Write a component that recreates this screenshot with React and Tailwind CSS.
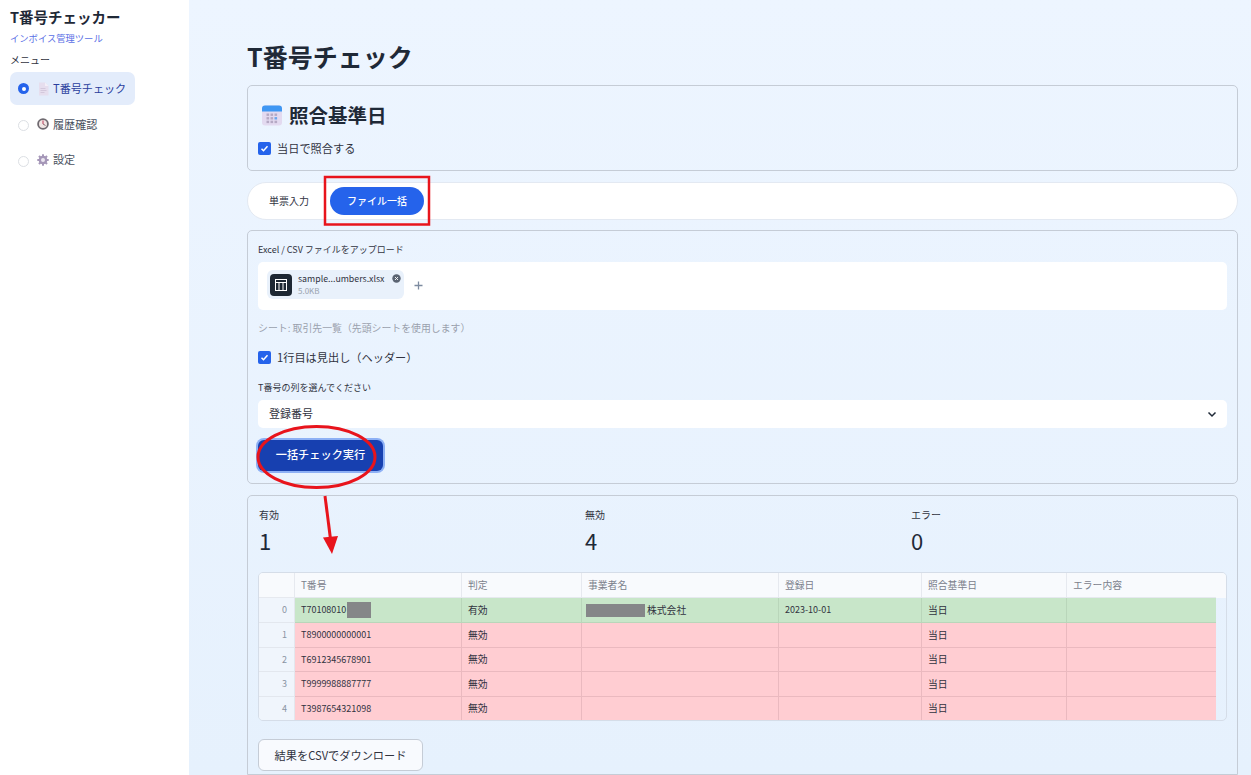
import React from "react";

const FONT = '"Noto Sans CJK JP", "Noto Sans", sans-serif';

function DocIcon() {
  return (
    <svg width="11" height="14" viewBox="0 0 11 14" className="ml-[1px] shrink-0">
      <path d="M1 0.500h6l3.500 3.500v9.500h-9.500z" fill="#e6deee" />
      <path d="M7 0.500l3.500 3.500h-3.500z" fill="#f4eff7" />
      <path d="M2.500 6.500h5M2.500 8.500h6M2.500 10.500h4" stroke="#d3c8dc" strokeWidth="1" />
    </svg>
  );
}

function ClockIcon() {
  return (
    <svg width="12" height="12" viewBox="0 0 12 12" className="shrink-0">
      <circle cx="6" cy="6" r="5.800" fill="#6f6a70" />
      <circle cx="6" cy="6" r="4" fill="#f1e6e4" />
      <path d="M6 2.500v3.500" stroke="#c03a5a" strokeWidth="1" />
      <path d="M6 6l2.500 1.500" stroke="#8a6a70" strokeWidth="1" />
    </svg>
  );
}

function GearIcon() {
  return (
    <svg width="12" height="12" viewBox="0 0 12 12" className="shrink-0">
      <g fill="#a597b8">
        <circle cx="6" cy="6" r="4.300" />
        {[0, 45, 90, 135].map((a) => (
          <rect key={a} x="5" y="0.300" width="2" height="11.400" transform={`rotate(${a} 6 6)`} />
        ))}
      </g>
      <circle cx="6" cy="6" r="2" fill="#ebe6f0" />
    </svg>
  );
}

function CalendarIcon() {
  return (
    <svg width="20" height="21" viewBox="0 0 20 21" className="shrink-0">
      <rect x="0" y="0.500" width="20" height="20" rx="3" fill="#e3daf0" />
      <path d="M0 6.500V3.500a3 3 0 0 1 3-3h14a3 3 0 0 1 3 3v3z" fill="#3f97f3" />
      {[0, 1, 2].map((r) =>
        [0, 1, 2].map((c) => (
          <rect
            key={`${r}-${c}`}
            x={4.500 + c * 4}
            y={8.500 + r * 3.600}
            width="2.600"
            height="2.400"
            fill={r === 1 && c === 2 ? "#6aa6ee" : "#b5a9c4"}
          />
        ))
      )}
    </svg>
  );
}

function Radio({ on }) {
  return on ? (
    <span className="flex h-[11px] w-[11px] shrink-0 items-center justify-center rounded-full bg-[#2563eb]">
      <span className="h-[4px] w-[4px] rounded-full bg-white" />
    </span>
  ) : (
    <span className="mt-[3px] h-[11px] w-[11px] shrink-0 rounded-full border border-[#dcdfe4] bg-white" />
  );
}

function Check() {
  return (
    <span className="flex h-[13px] w-[13px] shrink-0 items-center justify-center rounded-[2px] bg-[#2563eb]">
      <svg width="9" height="9" viewBox="0 0 9 9">
        <path d="M1.500 4.700l2 2 4-4.400" fill="none" stroke="#fff" strokeWidth="1.500" />
      </svg>
    </span>
  );
}

function NavItem({ on, icon, label }) {
  return (
    <div
      className={`flex h-[33px] w-[125px] items-center rounded-[7px] pl-[8px] ${
        on ? "bg-[#e3ecfb] text-[#2b3f9e]" : "text-[#4a5160]"
      }`}
    >
      <Radio on={on} />
      <span className="ml-[8px] flex w-[16px] justify-start">{icon}</span>
      <span className="text-[11.100px]">{label}</span>
    </div>
  );
}

function Stat({ label, value }) {
  return (
    <div className="w-[326px] shrink-0">
      <div className="text-[10px] leading-[14px] text-[#31333f]">{label}</div>
      <div className="mt-[4px] text-[22px] leading-[28px] text-[#1f2937]">{value}</div>
    </div>
  );
}

const COLS = "grid grid-cols-[36px_167px_120px_197px_143px_145px_149px]";

function Row({ index, num, verdict, name, date, valid, height }) {
  const bg = valid ? "bg-[#c8e6c9]" : "bg-[#ffcdd2]";
  const line = valid ? "border-[#b9d6ba]" : "border-[#eab9bf]";
  const cell = `flex items-center border-r border-b ${line} ${bg} pl-[6px] text-[#31333f]`;
  return (
    <div className={`${COLS} ${height}`}>
      <div className="flex items-center justify-end border-r border-b border-[#e3e7ee] bg-[#f0f5fc] pr-[7px] text-[9px] text-[#8a94a3]">
        {index}
      </div>
      <div className={`${cell} text-[9px]`}>
        {num}
        {valid && <span className="ml-[1px] h-[16px] w-[24px] bg-[#858688]" />}
      </div>
      <div className={`${cell} text-[9.800px]`}>{verdict}</div>
      <div className={`${cell} text-[9.800px]`}>
        {valid && (
          <>
            <span className="mr-[2px] ml-[-2px] h-[13px] w-[59px] bg-[#858688]" />
            {name}
          </>
        )}
      </div>
      <div className={`${cell} text-[9px]`}>{date}</div>
      <div className={`${cell} text-[9.800px]`}>当日</div>
      <div className={`${bg} border-b ${line}`} />
    </div>
  );
}

function Head({ children, last }) {
  return (
    <div
      className={`flex items-center border-b border-[#e6e9ef] pl-[6px] text-[9.800px] text-[#7b818c] ${
        last ? "" : "border-r"
      }`}
    >
      {children}
    </div>
  );
}

function Annotations() {
  return (
    <svg width="1251" height="775" viewBox="0 0 1251 775" className="pointer-events-none absolute top-0 left-0">
      <rect x="325" y="177" width="104" height="47.500" fill="none" stroke="#e8141c" strokeWidth="2.500" />
      <ellipse cx="316.500" cy="457" rx="58.500" ry="30.500" fill="none" stroke="#e8141c" strokeWidth="3" />
      <path d="M325 496l5.500 43" stroke="#e8141c" strokeWidth="3" fill="none" />
      <path d="M323 537.500l15-1.500-6 18z" fill="#e8141c" />
    </svg>
  );
}

export default function App() {
  return (
    <div className="relative flex h-[775px] w-full overflow-hidden" style={{ fontFamily: FONT }}>
      <aside className="w-[189px] shrink-0 bg-white pl-[10px]">
        <div className="mt-[7px] text-[14.500px] leading-[20px] font-bold text-[#1f2937]">T番号チェッカー</div>
        <div className="mt-[4px] text-[9.300px] leading-[14px] text-[#5a70e6]">インボイス管理ツール</div>
        <div className="mt-[8px] text-[10px] leading-[14px] text-[#31333f]">メニュー</div>
        <div className="mt-[5px] flex flex-col gap-[2.500px]">
          <NavItem on icon={<DocIcon />} label="T番号チェック" />
          <NavItem icon={<ClockIcon />} label="履歴確認" />
          <NavItem icon={<GearIcon />} label="設定" />
        </div>
      </aside>

      <main className="flex min-w-0 flex-1 flex-col bg-gradient-to-b from-[#edf5ff] to-[#e6f1fd] pt-[37px] pr-[13px] pl-[58px]">
        <h1 className="text-[25px] leading-[38px] font-bold text-[#1f2937]">T番号チェック</h1>
        <section className="mt-[10px] h-[86px] rounded-[5px] border border-[#c5ccd6] px-[10px]">
          <div className="mt-[17px] flex h-[24px] items-center gap-[7px] pl-[4px]">
            <CalendarIcon />
            <span className="text-[19.500px] leading-[24px] font-bold text-[#1f2937]">照合基準日</span>
          </div>
          <div className="mt-[13px] flex items-center gap-[6px] text-[11.200px] leading-[16px] text-[#31333f]">
            <Check />
            当日で照合する
          </div>
        </section>

        <div className="mt-[11px] flex h-[38px] items-center rounded-full border border-[#e3e9f2] bg-white pl-[21px]">
          <span className="pb-[2px] text-[10px] text-[#31333f]">単票入力</span>
          <span className="ml-[21px] flex h-[28px] w-[94px] items-center justify-center rounded-full bg-[#2563eb] pb-[2px] text-[10px] font-medium text-white">
            ファイル一括
          </span>
        </div>

        <section className="mt-[10px] h-[254px] rounded-[5px] border border-[#c5ccd6] px-[10px] pt-[12px]">
          <div className="text-[9px] leading-[14px] text-[#31333f]">Excel / CSV ファイルをアップロード</div>
          <div className="mt-[5px] flex h-[48px] items-center rounded-[5px] bg-white pl-[9px]">
            <div className="mb-[3px] flex h-[29px] w-[137px] items-center rounded-[6px] bg-[#e9f1fb] pl-[3px]">
              <span className="flex h-[22px] w-[22px] items-center justify-center rounded-[4px] bg-[#1d2733]">
                <svg width="12" height="12" viewBox="0 0 12 12" fill="none" stroke="#fff" strokeWidth="1">
                  <rect x="0.500" y="0.500" width="11" height="11" />
                  <path d="M0.500 3.500h11M4 3.500v8M8 3.500v8" />
                </svg>
              </span>
              <div className="ml-[6px] flex w-[88px] shrink-0 flex-col">
                <span className="text-[8.800px] leading-[12px] text-[#31333f]">sample...umbers.xlsx</span>
                <span className="text-[8px] leading-[11px] text-[#9aa3af]">5.0KB</span>
              </div>
              <svg width="9" height="9" viewBox="0 0 9 9" className="mb-[12px] ml-[6px] shrink-0">
                <circle cx="4.500" cy="4.500" r="4.200" fill="#5b6472" />
                <path d="M3 3l3 3M6 3l-3 3" stroke="#fff" strokeWidth="0.900" />
              </svg>
            </div>
            <svg width="9" height="9" viewBox="0 0 9 9" className="mb-[2px] ml-[10px]">
              <path d="M4.500 0.500v8M0.500 4.500h8" stroke="#7d8ba0" strokeWidth="1.300" />
            </svg>
          </div>
          <div className="mt-[11px] text-[9.900px] leading-[14px] text-[#9aa1ad]">シート: 取引先一覧（先頭シートを使用します）</div>
          <div className="mt-[14px] flex items-center gap-[6px] text-[11.200px] leading-[16px] text-[#31333f]">
            <Check />
            1行目は見出し（ヘッダー）
          </div>
          <div className="mt-[16px] text-[9px] leading-[14px] text-[#31333f]">T番号の列を選んでください</div>
          <div className="mt-[5px] flex h-[28px] items-center justify-between rounded-[5px] bg-white pr-[10px] pl-[11px] text-[11px] text-[#31333f]">
            <span className="pb-[2px]">登録番号</span>
            <svg width="10" height="10" viewBox="0 0 10 10" fill="none" stroke="#1f2937" strokeWidth="1.500">
              <path d="M1.500 3.500l3.500 3.500 3.500-3.500" />
            </svg>
          </div>
          <div className="mt-[12px] flex h-[31px] w-[125px] items-center justify-center rounded-[6px] bg-[#1740b0] pb-[2px] text-[11.200px] font-medium text-white ring-[2px] ring-[#8db0f5]">
            一括チェック実行
          </div>
        </section>

        <section className="mt-[11px] flex-1 rounded-t-[5px] border border-[#c5ccd6] px-[10px] pt-[12px]">
          <div className="flex pl-[1px]">
            <Stat label="有効" value="1" />
            <Stat label="無効" value="4" />
            <Stat label="エラー" value="0" />
          </div>
          <div className="mt-[18px] h-[149px] overflow-hidden rounded-[5px] border border-[#d5dde8]">
            <div className={`${COLS} h-[25px] bg-[#f8fafd]`}>
              <Head />
              <Head>T番号</Head>
              <Head>判定</Head>
              <Head>事業者名</Head>
              <Head>登録日</Head>
              <Head>照合基準日</Head>
              <Head last>エラー内容</Head>
            </div>
            <Row index="0" num="T70108010" verdict="有効" name="株式会社" date="2023-10-01" valid height="h-[25px]" />
            <Row index="1" num="T8900000000001" verdict="無効" height="h-[25px]" />
            <Row index="2" num="T6912345678901" verdict="無効" height="h-[24px]" />
            <Row index="3" num="T9999988887777" verdict="無効" height="h-[25px]" />
            <Row index="4" num="T3987654321098" verdict="無効" height="h-[24px]" />
          </div>
          <div className="mt-[18px] flex h-[32px] w-[165px] items-center justify-center rounded-[6px] border border-[#c5ccd6] bg-[#f8fafe] text-[11.200px] text-[#31333f]">
            結果をCSVでダウンロード
          </div>
        </section>
      </main>
      <Annotations />
    </div>
  );
}
